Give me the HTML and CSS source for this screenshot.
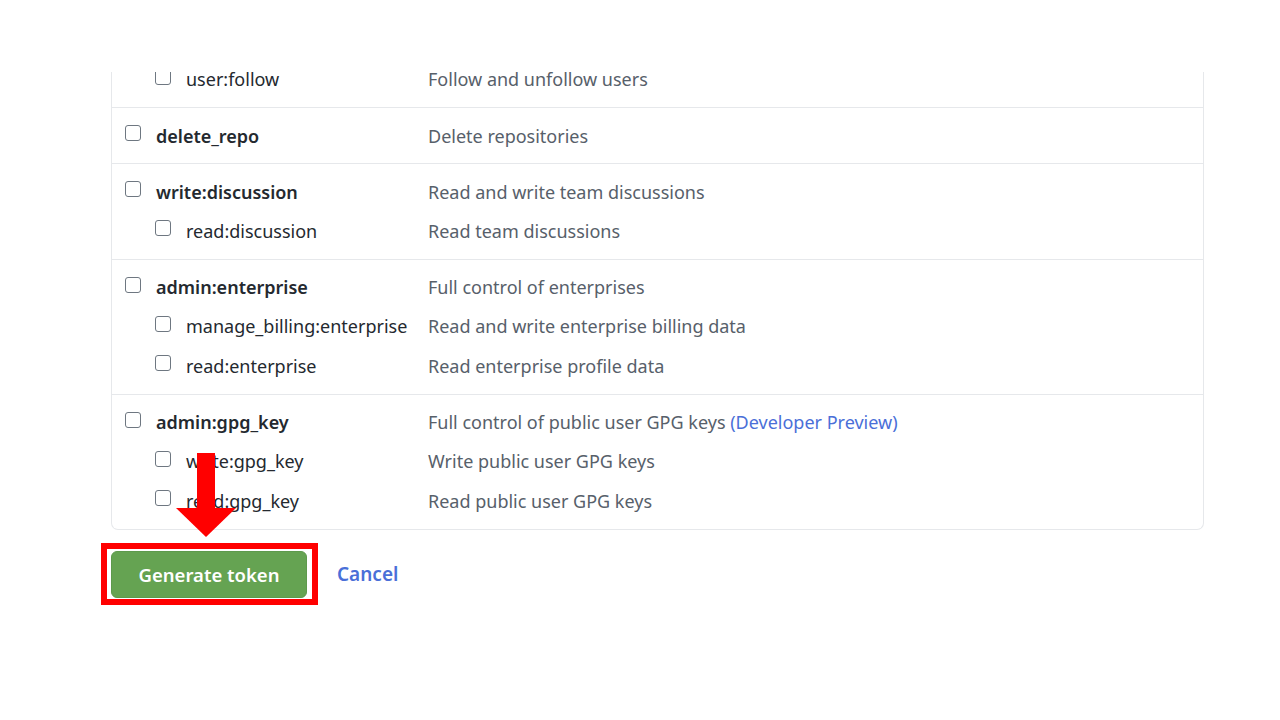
FILE: index.html
```html
<!DOCTYPE html>
<html>
<head>
<meta charset="utf-8">
<link rel="stylesheet" href="styles.css">
</head>
<body>
<div class="page">
  <div class="box">
    <div class="group group-first">
      <div class="item sub first-item">
        <label class="name"><span class="cb"></span><span>user:follow</span></label>
        <span class="desc">Follow and unfollow users</span>
      </div>
    </div>
    <div class="group">
      <div class="item">
        <label class="name"><span class="cb"></span><strong>delete_repo</strong></label>
        <span class="desc">Delete repositories</span>
      </div>
    </div>
    <div class="group">
      <div class="item">
        <label class="name"><span class="cb"></span><strong>write:discussion</strong></label>
        <span class="desc">Read and write team discussions</span>
      </div>
      <div class="item sub">
        <label class="name"><span class="cb"></span><span>read:discussion</span></label>
        <span class="desc">Read team discussions</span>
      </div>
    </div>
    <div class="group">
      <div class="item">
        <label class="name"><span class="cb"></span><strong>admin:enterprise</strong></label>
        <span class="desc">Full control of enterprises</span>
      </div>
      <div class="item sub">
        <label class="name"><span class="cb"></span><span>manage_billing:enterprise</span></label>
        <span class="desc">Read and write enterprise billing data</span>
      </div>
      <div class="item sub">
        <label class="name"><span class="cb"></span><span>read:enterprise</span></label>
        <span class="desc">Read enterprise profile data</span>
      </div>
    </div>
    <div class="group">
      <div class="item">
        <label class="name"><span class="cb"></span><strong>admin:gpg_key</strong></label>
        <span class="desc">Full control of public user GPG keys <a class="link">(Developer Preview)</a></span>
      </div>
      <div class="item sub">
        <label class="name"><span class="cb"></span><span>write:gpg_key</span></label>
        <span class="desc">Write public user GPG keys</span>
      </div>
      <div class="item sub">
        <label class="name"><span class="cb"></span><span>read:gpg_key</span></label>
        <span class="desc">Read public user GPG keys</span>
      </div>
    </div>
  </div>
  <div class="actions">
    <button class="btn-primary">Generate token</button>
    <a class="cancel">Cancel</a>
    <div class="highlight"></div>
    <svg class="arrow" width="60" height="84" viewBox="0 0 60 84">
      <rect x="21" y="0" width="18" height="56" fill="#ff0000"/>
      <polygon points="0,55 60,55 30,84" fill="#ff0000"/>
    </svg>
  </div>
</div>
</body>
</html>
```
FILE: styles.css
```css
html, body {
  margin: 0;
  padding: 0;
  background: #ffffff;
}
body {
  font-family: "Noto Sans", "Open Sans", "Liberation Sans", sans-serif;
  font-size: 18px;
  color: #24292f;
  width: 1280px;
  height: 720px;
  overflow: hidden;
}
.page {
  padding-top: 72px;
  padding-left: 111px;
  width: 1093px;
}
.box {
  border: 1px solid #e6e8eb;
  border-top: none;
  border-radius: 0 0 7px 7px;
  overflow: hidden;
}
.group {
  padding: 8px 0;
  border-top: 1px solid #e6e8eb;
}
.group-first {
  border-top: none;
  padding-top: 0;
}
.item {
  display: grid;
  grid-template-columns: 316px 1fr;
  align-items: center;
  height: 39px;
}
.item.sub {
  height: 39.5px;
}
.item.first-item {
  margin-top: -12.5px;
}
.name {
  display: flex;
  align-items: center;
  gap: 15px;
  padding-left: 13px;
  white-space: nowrap;
}
.item.sub .name {
  padding-left: 43px;
}
.name strong {
  font-weight: 600;
}
.cb {
  width: 14px;
  height: 14px;
  border: 1.5px solid #6e7781;
  border-radius: 3px;
  background: #fff;
  flex: none;
  margin-top: -5px;
}
.desc {
  color: #57606a;
  white-space: nowrap;
}
.link {
  color: #4a6fd8;
}
.actions {
  position: relative;
  display: flex;
  align-items: center;
  gap: 30px;
  margin-top: 21px;
}
.btn-primary {
  width: 196px;
  height: 47px;
  background: #65a352;
  color: #ffffff;
  border: 1px solid #5d9a4c;
  border-radius: 6px;
  font-family: "Noto Sans", "Open Sans", "Liberation Sans", sans-serif;
  font-size: 18.5px;
  font-weight: 600;
  padding: 0;
}
.cancel {
  color: #4a6fd8;
  font-weight: 600;
  font-size: 19px;
}
.highlight {
  position: absolute;
  left: -10px;
  top: -8px;
  width: 217px;
  height: 62px;
  border: 6px solid #ff0000;
  box-sizing: border-box;
}
.arrow {
  position: absolute;
  left: 65px;
  top: -98px;
}
```
